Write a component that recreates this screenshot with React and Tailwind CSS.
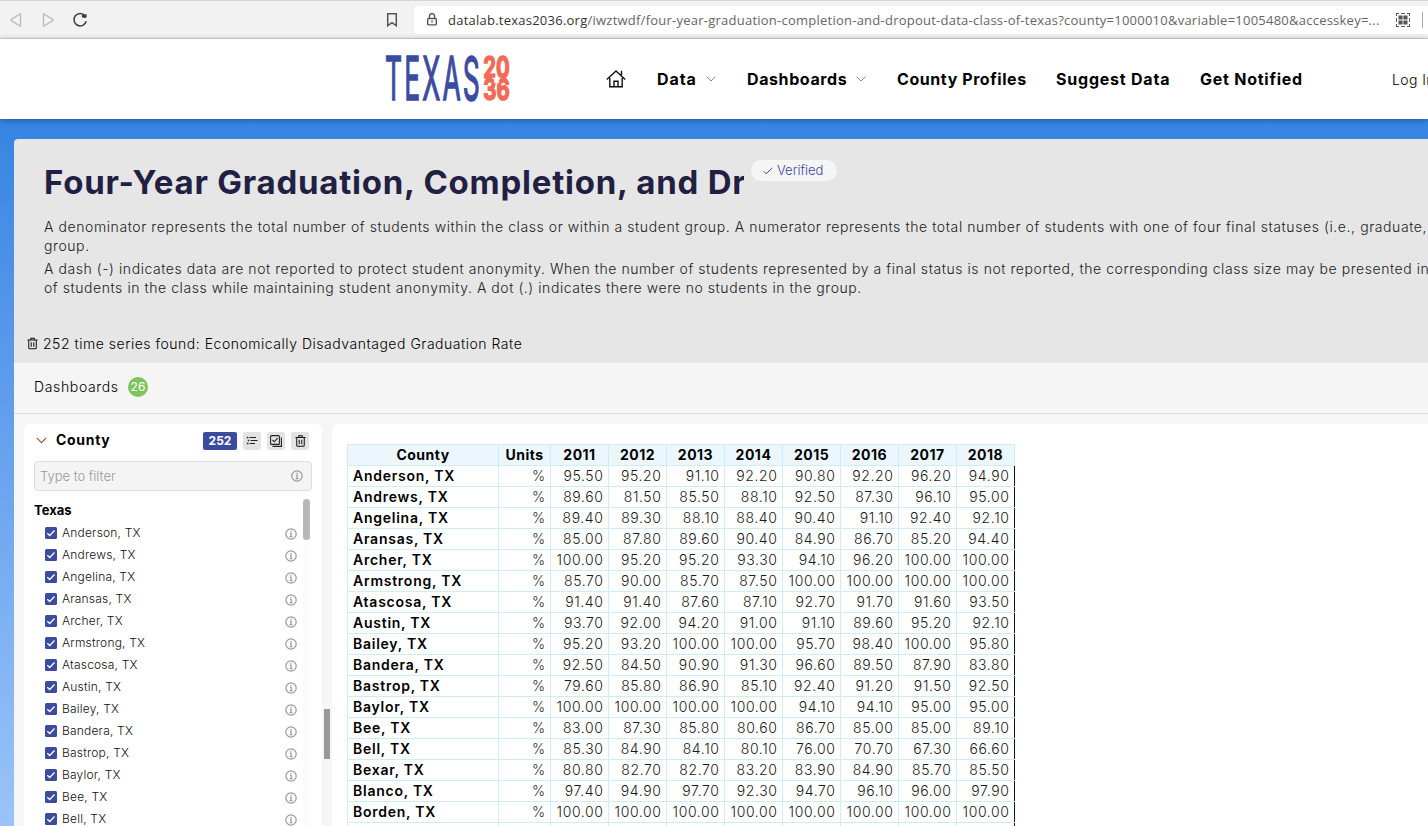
import React from "react";

const YEARS = [2011, 2012, 2013, 2014, 2015, 2016, 2017, 2018];

const ROWS = [
  ["Anderson, TX", "95.50 95.20 91.10 92.20 90.80 92.20 96.20 94.90"],
  ["Andrews, TX", "89.60 81.50 85.50 88.10 92.50 87.30 96.10 95.00"],
  ["Angelina, TX", "89.40 89.30 88.10 88.40 90.40 91.10 92.40 92.10"],
  ["Aransas, TX", "85.00 87.80 89.60 90.40 84.90 86.70 85.20 94.40"],
  ["Archer, TX", "100.00 95.20 95.20 93.30 94.10 96.20 100.00 100.00"],
  ["Armstrong, TX", "85.70 90.00 85.70 87.50 100.00 100.00 100.00 100.00"],
  ["Atascosa, TX", "91.40 91.40 87.60 87.10 92.70 91.70 91.60 93.50"],
  ["Austin, TX", "93.70 92.00 94.20 91.00 91.10 89.60 95.20 92.10"],
  ["Bailey, TX", "95.20 93.20 100.00 100.00 95.70 98.40 100.00 95.80"],
  ["Bandera, TX", "92.50 84.50 90.90 91.30 96.60 89.50 87.90 83.80"],
  ["Bastrop, TX", "79.60 85.80 86.90 85.10 92.40 91.20 91.50 92.50"],
  ["Baylor, TX", "100.00 100.00 100.00 100.00 94.10 94.10 95.00 95.00"],
  ["Bee, TX", "83.00 87.30 85.80 80.60 86.70 85.00 85.00 89.10"],
  ["Bell, TX", "85.30 84.90 84.10 80.10 76.00 70.70 67.30 66.60"],
  ["Bexar, TX", "80.80 82.70 82.70 83.20 83.90 84.90 85.70 85.50"],
  ["Blanco, TX", "97.40 94.90 97.70 92.30 94.70 96.10 96.00 97.90"],
  ["Borden, TX", "100.00 100.00 100.00 100.00 100.00 100.00 100.00 100.00"],
];

function Info({ className = "" }) {
  return (
    <svg viewBox="0 0 12 12" className={"size-3 shrink-0 " + className} fill="none" stroke="#999" strokeWidth="1.2">
      <circle cx="6" cy="6" r="5.2" />
      <path d="M4.9 5.2H6.1V8.7M4.7 8.7H7.4" />
      <path d="M5.5 3.3H6.6" strokeWidth="1.3" />
    </svg>
  );
}

function Trash({ className = "" }) {
  return (
    <svg viewBox="0 0 12 13" className={"shrink-0 " + className} fill="none" stroke="#111" strokeWidth="1.1">
      <path d="M0.5 2.6H11.5M4.1 2.5V0.8H7.9V2.5M1.9 2.6V11.2Q1.9 12.3 3 12.3H9Q10.1 12.3 10.1 11.2V2.6M4.6 5V10M7.4 5V10" />
    </svg>
  );
}

function Chevron({ className = "", color = "#777" }) {
  return (
    <svg viewBox="0 0 10 6" className={"shrink-0 " + className} fill="none" stroke={color}>
      <path d="M0.7 0.7L5 5L9.3 0.7" />
    </svg>
  );
}

function BrowserBar() {
  return (
    <div className="flex h-[39px] shrink-0 items-center overflow-hidden border-t border-b border-t-[#d3d6d9] border-b-[#d5d5d5] bg-[#f2f2f2] pl-[10px]">
      <svg viewBox="0 0 12 14" className="h-[14px] w-3" fill="none" stroke="#b9b9b9" strokeWidth="1.3" strokeLinejoin="round">
        <path d="M10.5 0.8V13.2L1.3 7.6Q0.9 7 1.3 6.4Z" />
      </svg>
      <svg viewBox="0 0 12 14" className="ml-5 h-[14px] w-3" fill="none" stroke="#b9b9b9" strokeWidth="1.3" strokeLinejoin="round">
        <path d="M1.5 0.8V13.2L10.7 7.6Q11.1 7 10.7 6.4Z" />
      </svg>
      <svg viewBox="0 0 16 16" className="ml-[18px] size-4" fill="none" stroke="#3c3c3c" strokeWidth="1.5">
        <path d="M13 3.8A6.2 6.2 0 1 0 14.2 9.2" />
        <path d="M10.2 5.5A2.2 2.2 0 0 1 10.6 2.4L14.6 2.2V5A2 2 0 0 1 11.4 5.4Z" fill="#3c3c3c" stroke="none" />
      </svg>
      <svg viewBox="0 0 12 14" className="ml-[298px] h-[14px] w-3" fill="none" stroke="#555" strokeWidth="1.5">
        <path d="M1.7 0.8H10.3V12.7L6 9.7L1.7 12.7Z" />
      </svg>
      <div className="ml-4 flex h-7 flex-1 items-center rounded-l bg-white pl-[13px]">
        <svg viewBox="0 0 10 13" className="h-[13px] w-[10px] shrink-0" fill="none" stroke="#555" strokeWidth="1.4">
          <path d="M2.4 5.5V3.2A2.6 2.6 0 0 1 7.6 3.2V5.5" />
          <rect x="0.7" y="5.5" width="8.6" height="6.4" rx="1" />
          <path d="M5 7.6V9.6" />
        </svg>
        <div className="ml-[11px] w-[932px] shrink-0 pt-0.5 font-['Open_Sans',sans-serif] text-[13px] tracking-[0.24px] whitespace-nowrap text-[#666]">
          <span className="text-[#333]">datalab.texas2036.org</span>
          /iwztwdf/four-year-graduation-completion-and-dropout-data-class-of-texas?county=1000010&amp;variable=1005480&amp;accesskey=...
        </div>
        <svg viewBox="0 0 14 14" className="ml-[16px] size-[14px] shrink-0" fill="#555">
          <path d="M0 3V0H3V1H1V3ZM11 0H14V3H13V1H11ZM0 11V14H3V13H1V11ZM14 11V14H11V13H13V11ZM0 5H1V9H0ZM13 5H14V9H13ZM5 0H9V1H5ZM5 13H9V14H5Z" />
          <path d="M2.5 2.5H6.6V6.6H2.5ZM7.4 2.5H11.5V6.6H7.4ZM2.5 7.4H6.6V11.5H2.5ZM7.4 7.4H11.5V11.5H7.4Z" />
        </svg>
        <div className="ml-3 h-4 w-px shrink-0 bg-[#aaa]" />
      </div>
    </div>
  );
}

function Logo() {
  return (
    <svg viewBox="0 0 125 48" className="ml-[386px] h-12 w-[125px] shrink-0 overflow-visible font-[Inter,sans-serif]">
      <text x="-1" y="45.3" fontSize="61" fontWeight="400" letterSpacing="5" fill="#3b4ba0" stroke="#3b4ba0" strokeWidth="1.5" textLength="97" lengthAdjust="spacingAndGlyphs">TEXAS</text>
      <g fill="#f26a55" stroke="#f26a55" strokeWidth="1.5" fontWeight="700" fontSize="30">
        <text x="97.3" y="23" textLength="26.5" lengthAdjust="spacingAndGlyphs">20</text>
        <text x="97.3" y="45" textLength="26.5" lengthAdjust="spacingAndGlyphs">36</text>
      </g>
      <path d="M110.5 19.3L111.7 22.8H115.4L112.4 25L113.6 28.5L110.5 26.3L107.4 28.5L108.6 25L105.6 22.8H109.3Z" fill="#fff" />
    </svg>
  );
}

function Header() {
  return (
    <header className="relative z-10 flex h-20 shrink-0 items-center overflow-hidden bg-white text-base font-bold whitespace-nowrap text-black shadow-[0_1px_6px_rgba(0,0,0,0.35)]">
      <Logo />
      <svg viewBox="0 0 20 18" className="ml-[95px] h-[18px] w-5 shrink-0" fill="none" stroke="#111" strokeWidth="1.4">
        <path d="M0.8 9.5L10 1L19.2 9.5M3.8 8V16.8H16.2V8M8 16.5V11.3H12V16.5M15.5 5V0.8" />
      </svg>
      <div className="ml-[31px] flex w-[90px] shrink-0 items-center tracking-[0.9px]">
        <span className="w-[49px]">Data</span>
        <Chevron className="h-[6px] w-[10px]" color="#888" />
      </div>
      <div className="flex w-[150px] shrink-0 items-center tracking-[0.6px]">
        <span className="w-[109px]">Dashboards</span>
        <Chevron className="h-[6px] w-[10px]" color="#888" />
      </div>
      <span className="w-[159px] shrink-0 tracking-[0.57px]">County Profiles</span>
      <span className="w-36 shrink-0 tracking-[0.78px]">Suggest Data</span>
      <span className="w-48 shrink-0 tracking-[0.75px]">Get Notified</span>
      <span className="shrink-0 text-[14px] font-light tracking-[0.4px]">Log In</span>
    </header>
  );
}

function Intro() {
  return (
    <section className="h-56 shrink-0 overflow-hidden rounded-tl bg-[#e6e6e6] whitespace-nowrap">
      <div className="flex h-[78px] items-start pt-[21px] pl-[30px]">
        <h1 className="w-[700px] overflow-hidden text-[33px] leading-[44px] font-bold tracking-[0.76px] text-[#221f43]">
          Four-Year Graduation, Completion, and Dropout Data
        </h1>
        <div className="ml-[7px] flex h-[21px] w-[86px] items-center rounded-full bg-[#f5f5f5] pl-3 text-[13px] font-light text-[#3b4ba0]">
          <svg viewBox="0 0 10 8" className="mr-1 h-2 w-[10px]" fill="none" stroke="#3b4ba0">
            <path d="M0.7 4.3L3.2 6.8L9.3 0.9" />
          </svg>
          Verified
        </div>
      </div>
      <div className="h-[111px] pl-[30px] text-[14px] leading-[19px] font-light text-[#222]">
        <p className="mb-1 tracking-[0.585px]">
          A denominator represents the total number of students within the class or within a student group. A numerator represents the total number of students with one of four final statuses (i.e., graduate, continuer,
          <br />
          group.
        </p>
        <p className="tracking-[0.557px]">
          A dash (-) indicates data are not reported to protect student anonymity. When the number of students represented by a final status is not reported, the corresponding class size may be presented in such a way
          <br />
          of students in the class while maintaining student anonymity. A dot (.) indicates there were no students in the group.
        </p>
      </div>
      <div className="flex h-[31px] items-center pl-[13px] text-[14px] font-light tracking-[0.52px] text-black">
        <Trash className="mr-[5px] h-[13px] w-[11px]" />
        252 time series found: Economically Disadvantaged Graduation Rate
      </div>
    </section>
  );
}

function IconButton({ children }) {
  return <div className="ml-[6px] flex size-[18px] items-center justify-center rounded-xs bg-[#e3e3e3]">{children}</div>;
}

function CountyFilter() {
  return (
    <aside className="flex w-[298px] shrink-0 flex-col overflow-hidden rounded-t-md bg-white">
      <div className="flex h-[37px] shrink-0 items-center pr-[13px] pb-1 pl-3">
        <Chevron className="h-[7px] w-[11px]" color="#8a5a2b" />
        <span className="ml-[9px] pb-0.5 text-[14px] font-bold tracking-[0.7px] text-black">County</span>
        <span className="ml-auto flex h-[18px] w-[34px] items-center justify-center rounded-xs bg-[#3b4ba0] text-[12px] font-bold text-white">252</span>
        <IconButton>
          <svg viewBox="0 0 12 12" className="size-3" fill="none" stroke="#222">
            <path d="M3.5 2.5H10M4.5 5.5H11.5M3.5 8.5H9" />
            <path d="M0.8 2.5H2.4M0.8 8.5H2.4M1.8 5.5H3.2" strokeWidth="1.6" />
          </svg>
        </IconButton>
        <IconButton>
          <svg viewBox="0 0 12 12" className="size-3" fill="none" stroke="#222" strokeWidth="1.1">
            <rect x="0.6" y="0.6" width="8.8" height="8.8" rx="1" />
            <path d="M11.4 2.5V11.4H2.5M2.5 5L4.3 6.8L7.6 3.2" />
          </svg>
        </IconButton>
        <IconButton>
          <Trash className="h-3 w-[11px]" />
        </IconButton>
      </div>
      <div className="mx-[10px] flex h-[30px] shrink-0 items-center justify-between rounded border border-[#ddd] bg-[#f4f4f4] pr-2 pl-[5px] text-[13px] font-light text-[#999]">
        <span className="pt-0.5">Type to filter</span>
        <Info />
      </div>
      <div className="mt-2 flex min-h-0 flex-1 overflow-hidden pl-[10px]">
        <div className="w-[267px] shrink-0">
          <div className="h-[23px] text-[13px] leading-[23px] font-bold text-black">Texas</div>
          {ROWS.slice(0, 14).map(([name]) => (
            <div key={name} className="flex h-[22px] items-center pr-1 pl-[11px]">
              <svg viewBox="0 0 12 12" className="size-3 shrink-0">
                <rect width="12" height="12" rx="1.5" fill="#3b4ba0" />
                <path d="M2.3 6.2L4.7 8.5L9.5 3.5" fill="none" stroke="#fff" strokeWidth="1.3" />
              </svg>
              <span className="ml-[5px] flex-1 text-[12px] font-light tracking-[0.2px] text-[#111]">{name}</span>
              <Info className="translate-y-px" />
            </div>
          ))}
        </div>
        <div className="ml-[2px] w-[7px] shrink-0 bg-[#fcfcfc]">
          <div className="h-[41px] rounded-sm bg-[#b8b8b8]" />
        </div>
      </div>
    </aside>
  );
}

function DataTable() {
  return (
    <main className="min-w-0 flex-1 overflow-hidden rounded-tl-md bg-white pt-5 pl-[15px]">
      <table className="w-[668px] table-fixed border-collapse text-[14px] leading-5 whitespace-nowrap text-black">
        <colgroup>
          <col className="w-[151px]" />
          <col className="w-[52px]" />
          {YEARS.map((y) => (
            <col key={y} className="w-[58px]" />
          ))}
        </colgroup>
        <thead>
          <tr className="h-[21px] bg-[#ebf7fc] tracking-[0.5px]">
            {["County", "Units", ...YEARS].map((h) => (
              <th key={h} className="border border-[#d0ecf6] p-0 font-bold">
                {h}
              </th>
            ))}
          </tr>
        </thead>
        <tbody>
          {ROWS.map(([name, values]) => (
            <tr key={name} className="h-[21px]">
              <th className="border border-[#d0ecf6] p-0 pl-[5px] text-left font-semibold tracking-[0.75px]">{name}</th>
              <td className="border border-[#d0ecf6] p-0 pr-[5px] text-right font-light text-[#333]">%</td>
              {values.split(" ").map((v, i) => (
                <td key={i} className="border border-[#d0ecf6] p-0 pr-[4.5px] text-right font-light tracking-[0.6px] text-[#1a1a1a] last:border-r-[#111]">
                  {v}
                </td>
              ))}
            </tr>
          ))}
          <tr className="h-[21px]">
            {["c", "u", ...YEARS].map((k) => (
              <td key={k} className="border border-[#d0ecf6] p-0 last:border-r-[#111]" />
            ))}
          </tr>
        </tbody>
      </table>
    </main>
  );
}

export default function App() {
  return (
    <div className="flex h-[826px] w-[1428px] flex-col overflow-hidden bg-white font-[Inter,sans-serif]">
      <BrowserBar />
      <Header />
      <div className="flex min-h-0 flex-1 flex-col overflow-hidden bg-linear-to-b from-[#3584e3] to-[#9ac3f8] pt-5 pl-[14px]">
        <Intro />
        <div className="flex h-[51px] shrink-0 items-center border-b border-[#dedede] bg-[#f5f5f5] pb-[2px] pl-5 text-[14px] font-light text-black">
          <span className="w-[94px] pb-0.5 tracking-[0.65px]">Dashboards</span>
          <span className="flex size-5 items-center justify-center rounded-full bg-[#80c35c] text-[12px] font-normal text-white">26</span>
        </div>
        <div className="flex min-h-0 flex-1 bg-[#f6f6f6] pt-[10px] pl-[10px]">
          <CountyFilter />
          <div className="w-[10px] shrink-0 pt-[285px] pl-[2px]">
            <div className="h-[50px] w-[6px] bg-[#999]" />
          </div>
          <DataTable />
        </div>
      </div>
    </div>
  );
}
